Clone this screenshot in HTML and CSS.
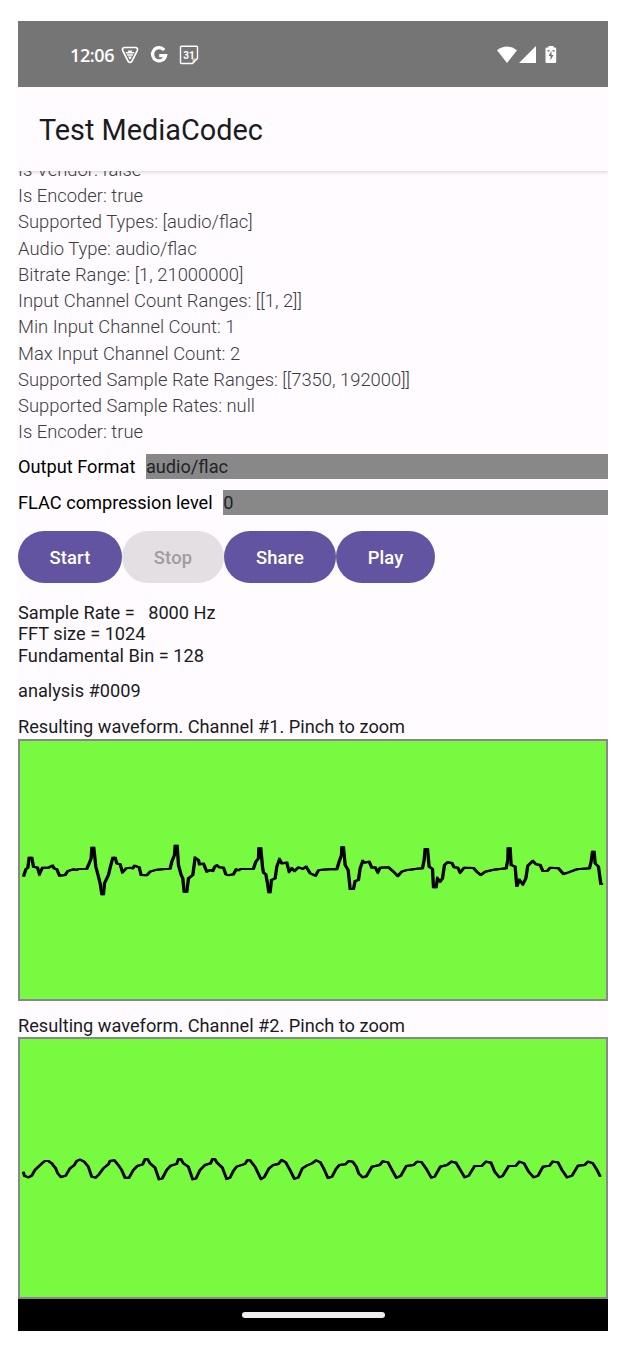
FILE: index.html
```
<!DOCTYPE html>
<html lang="en">
<head>
<meta charset="utf-8">
<title>Test MediaCodec</title>
<link rel="stylesheet" href="styles.css">
</head>
<body>
<main class="screen">
  <header class="status">
    <span class="time">12:06</span>
    <svg class="ic-shield" width="18" height="18" viewBox="0 0 18 18"><path d="M3.4 1.5h11.2a2 2 0 0 1 1.8 2.8l-5.500 10.900q-1.900 2.400-3.800 0L1.600 4.300a2 2 0 0 1 1.800-2.800Z" fill="none" stroke="#fff" stroke-width="1.7"/><path d="M4.800 6h2.200V4.600h4V6h2.200v1.400H4.800ZM5.800 8.300h6.400l-.6 1.400H6.400ZM7 10.500h4L9 13.700Z" fill="#fff"/></svg>
    <svg class="ic-g" width="18" height="18" viewBox="0 0 18 18"><path d="M14.2 4.100A6.600 6.600 0 1 0 15.600 9.600H9.200" fill="none" stroke="#fff" stroke-width="3.2"/></svg>
    <svg class="ic-cal" width="20" height="20" viewBox="0 0 20 20"><path d="M2.500 1.300h15q1 0 1 1v11.200l-5 5h-11q-1 0-1-1V2.300q0-1 1-1Z" fill="none" stroke="#fff" stroke-width="1.4"/><path d="M18.500 13.500h-5v5Z" fill="#fff" opacity=".6"/><text x="9.900" y="13.600" text-anchor="middle" class="cal-day">31</text></svg>
    <span class="grow"></span>
    <svg class="ic-wifi" width="20" height="18" viewBox="0 0 20 18"><path d="M0 4.300Q10-3.200 20 4.300L10 17Z" fill="#fff"/></svg>
    <svg class="ic-cell" width="17" height="18" viewBox="0 0 17 18"><path d="M17 0v17H0Z" fill="#fff"/></svg>
    <svg class="ic-bat" width="12" height="18" viewBox="0 0 12 18"><path d="M3.500 0h5v1.500H10q1.200 0 1.200 1.200v13q0 1.300-1.200 1.300H1.800Q.5 17 .5 15.700V2.700q0-1.200 1.300-1.200H3.500Z" fill="#fff"/><path d="M6.500 5 3.500 10h2v4.200l3-5.200h-2ZM2.500 4h2v1.400h-2ZM7.500 4h2v1.400h-2Z" fill="#757575"/></svg>
  </header>
  <div class="appbar"><h1>Test MediaCodec</h1></div>
  <section class="info">
    <div>Is Vendor: false</div>
    <div>Is Encoder: true</div>
    <div>Supported Types: [audio/flac]</div>
    <div>Audio Type: audio/flac</div>
    <div>Bitrate Range: [1, 21000000]</div>
    <div>Input Channel Count Ranges: [[1, 2]]</div>
    <div>Min Input Channel Count: 1</div>
    <div>Max Input Channel Count: 2</div>
    <div>Supported Sample Rate Ranges: [[7350, 192000]]</div>
    <div>Supported Sample Rates: null</div>
    <div>Is Encoder: true</div>
  </section>
  <section class="form">
    <div class="row"><label>Output Format</label><div class="spinner">audio/flac</div></div>
    <div class="row"><label>FLAC compression level</label><div class="spinner">0</div></div>
  </section>
  <div class="buttons">
    <button class="btn start">Start</button>
    <button class="btn stop" disabled>Stop</button>
    <button class="btn share">Share</button>
    <button class="btn play">Play</button>
  </div>
  <div class="stats">Sample Rate =   8000 Hz
FFT size = 1024
Fundamental Bin = 128</div>
  <div class="analysis">analysis #0009</div>
  <div class="caption first">Resulting waveform. Channel #1. Pinch to zoom</div>
  <svg class="wave" viewBox="18 739 590 262">
    <g id="w1" class="trace" transform="translate(14.500 835) scale(.33333)">
      <polyline points="25,125 32,103 38,98 42,68 50,68 55,95 67,98 73,117 82,98 100,98 112,92 117,100 125,103 133,122 150,120 158,108 175,103 185,105 190,102 215,101 220,90 228,70 230,38 236,38 242,95 250,125 255,145 260,178 265,178 268,145 280,120 285,98 293,68 300,68 305,85 315,88 322,112 333,100 345,98 353,100 358,92 372,97 378,120 395,121 405,110 425,104 465,101 470,80 478,60 480,32 486,32 490,90 498,120 503,130 507,170 515,170 520,130 533,120 540,68 550,75 553,88 565,86 575,110 585,105"/>
      <polyline transform="translate(585)" points="0,105 8,108 14,95 20,91 27,97 40,98 47,118 55,121 70,118 78,103 85,106 92,102 130,101 137,80 145,70 146,40 152,40 157,95 160,113 167,118 172,145 176,172 180,172 184,135 195,130 200,95 208,73 215,85 230,83 237,110 245,100 253,108 265,97 278,102 288,95 300,115 316,122 325,106 335,104 360,103 380,103 387,80 394,60 395,37 400,37 405,90 414,105 420,162 430,162 435,138 445,135 450,100 458,78 463,83 477,80 485,98 495,97 503,112 510,98 535,97 550,110 563,123 575,110 590,105 600,104"/>
      <polyline transform="translate(1185)" points="0,104 20,101 37,100 42,75 45,42 52,42 57,95 67,102 70,157 78,157 82,130 90,140 97,130 103,90 112,82 125,84 132,97 143,98 150,113 162,98 190,99 200,110 212,120 225,110 250,104 288,100 293,75 294,40 300,40 303,90 315,95 320,155 328,135 338,148 347,130 353,92 368,78 378,88 390,90 398,108 412,107 420,98 445,100 460,117 475,112 500,103 538,100 543,80 547,50 552,50 555,85 565,95 572,147 577,147"/>
    </g>
    <use href="#w1" x="1.300"/>
  </svg>
  <div class="caption">Resulting waveform. Channel #2. Pinch to zoom</div>
  <svg class="wave" viewBox="18 1037 590 262">
    <g id="w2" class="trace" transform="translate(14.500 1145) scale(.33333)">
      <polyline points="25,80 28,92 40,97 50,92 60,75 82,54 90,48 100,48 110,55 122,70 128,85 138,96 152,92 165,70 178,60 185,48 195,44 207,50 220,65 230,95 242,98 252,88 265,70 280,58 285,48 298,46 310,60 320,75 330,98 342,98 355,75 367,63 383,58 390,43 398,43 405,55 420,68 432,103 442,100 455,75 467,62 485,57 490,43 498,43 505,55 520,65 533,103 543,100 555,75 570,60 587,55 592,43 600,43 605,52 622,68 635,102 645,98 655,78 665,65 690,57 697,46 705,46 720,65 738,102 748,96 762,70 775,60 790,57 800,45 812,52 825,75 838,101 850,97 862,70 875,62 891,55"/>
      <polyline transform="translate(891)" points="0,55 12,46 25,52 35,70 48,99 60,95 72,72 82,60 100,58 110,48 122,50 133,65 140,85 152,97 163,94 180,65 203,60 212,49 228,52 240,75 253,98 266,93 283,63 305,60 315,50 328,51 342,70 358,98 368,95 385,65 405,60 418,50 432,53 445,75 458,97 470,92 488,63 510,62 522,50 537,53 548,80 562,97 572,93 590,63 612,62 622,50 636,55 650,80 665,97 678,92 693,65 713,62 722,50 738,52 750,75 765,97 780,92 798,62 818,60 828,50 842,54 855,75 865,95"/>
    </g>
    <use href="#w2" x="1"/>
  </svg>
  <footer class="nav"><span class="pill"></span></footer>
</main>
</body>
</html>
```
FILE: styles.css
```
* { box-sizing: border-box; }
body {
  margin: 0;
  background: #fff;
  font-family: Roboto, "Liberation Sans", sans-serif;
}
.screen {
  width: 590px;
  height: 1310px;
  margin: 21px 0 0 18px;
  background: #fffbff;
  color: #1b1b1f;
  display: flex;
  flex-direction: column;
  font-size: 18.2px;
  line-height: 21.5px;
}
.screen > * { flex-shrink: 0; }
.status {
  height: 66px;
  background: #757575;
  display: flex;
  align-items: center;
  padding: 2px 51px 0 52px;
}
.time {
  width: 51px;
  color: #fff;
  font: 600 18px/22px "Open Sans", sans-serif;
  letter-spacing: -0.4px;
  padding-bottom: 1px;
}
.ic-g { margin-left: 11px; }
.ic-cal { margin-left: 11px; }
.cal-day { font: 700 10px Roboto, sans-serif; fill: #fff; }
.grow { flex: 1; }
.ic-wifi { margin-right: 1px; }
.ic-cell { margin-left: 1px; }
.ic-bat { margin-left: 9px; }
.appbar {
  height: 84px;
  background: #fffbff;
  display: flex;
  align-items: center;
  padding: 2px 0 0 21px;
  box-shadow: 0 1px 4px rgba(0, 0, 0, .18);
  clip-path: inset(0 0 -8px 0);
  z-index: 1;
}
.appbar h1 {
  margin: 0;
  font-size: 28.85px;
  font-weight: 400;
  line-height: 36px;
}
.info {
  height: 274.5px;
  overflow: hidden;
  display: flex;
  flex-direction: column;
  justify-content: flex-end;
  font-size: 18.4px;
  font-weight: 300;
  line-height: 26.25px;
  color: #3c3c44;
}
.info div { flex-shrink: 0; }
.form {
  padding-top: 8.900px;
  display: flex;
  flex-direction: column;
  gap: 10.500px;
}
.row { display: flex; height: 25px; line-height: 26.500px; }
.row label { margin-right: 10.500px; color: #000; }
.spinner { flex: 1; background: #888; color: #222226; }
.buttons { display: flex; padding-top: 16.100px; height: 68.100px; }
.btn {
  height: 52px;
  border: 0;
  padding: 3px 0 0;
  border-radius: 26px;
  background: #6254a0;
  color: #fff;
  font: 500 18.36px/22px Roboto, sans-serif;
  letter-spacing: 0.13px;
}
.btn.stop { background: #e4dfe3; color: #a09ca1; }
.start { width: 104px; }
.stop { width: 102px; }
.share { width: 112px; }
.play { width: 99px; }
.stats { margin-top: 19px; white-space: pre; }
.analysis { margin-top: 14px; }
.caption { margin-top: 14px; height: 22px; }
.caption.first { height: 23px; }
.wave {
  display: block;
  width: 590px;
  height: 262px;
  background: #78fa41;
  box-shadow: inset 0 0 0 2px #888;
}
.trace {
  fill: none;
  stroke: #000;
  stroke-width: 6;
}
.nav {
  height: 32px;
  background: #000;
  display: flex;
  align-items: center;
  justify-content: center;
}
.pill { width: 143px; height: 6px; border-radius: 3px; background: #eee; }
```
